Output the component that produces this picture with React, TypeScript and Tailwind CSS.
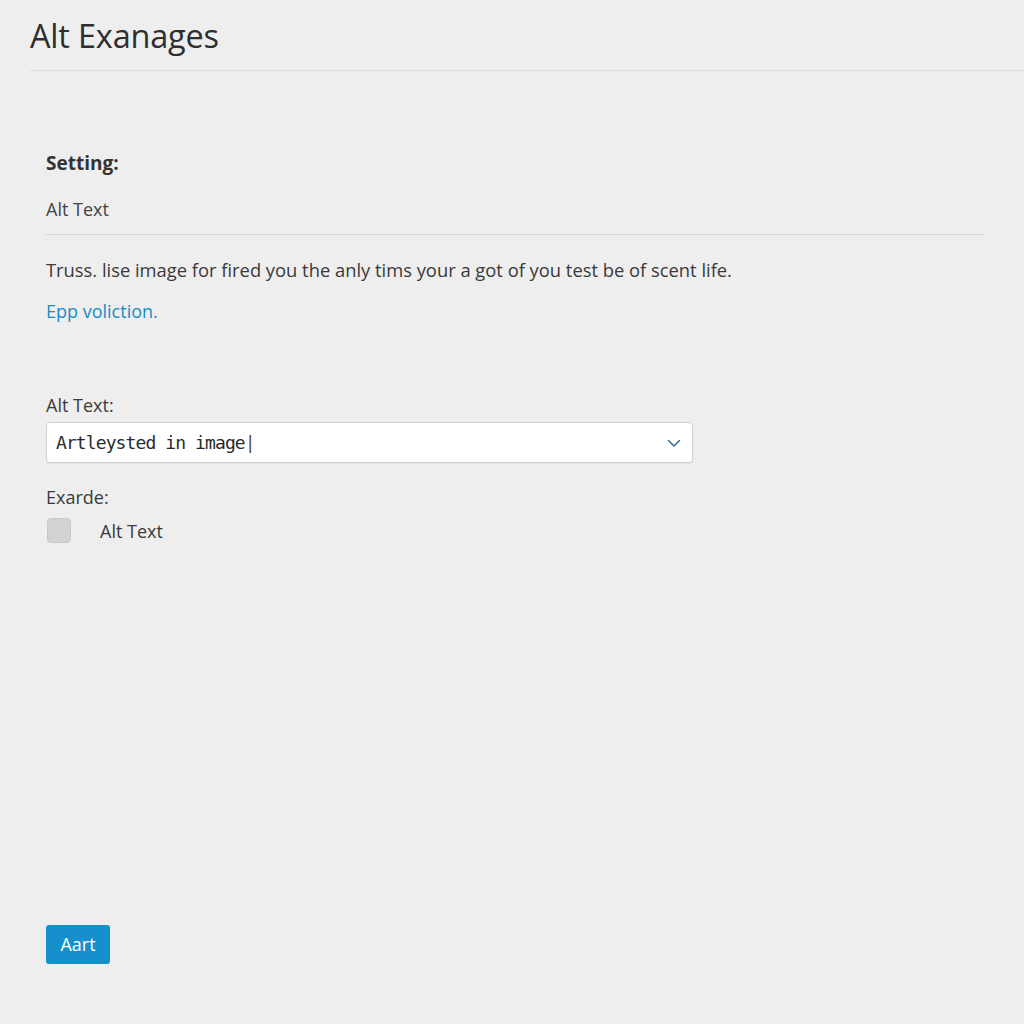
import React from "react";

export default function App() {
  return (
    <div
      className="min-h-[1024px] w-full bg-[#eeeeee] text-[#333333]"
      style={{ fontFamily: '"Open Sans", "Noto Sans", sans-serif' }}
    >
      <div className="pl-[30px] pt-[14px]">
        <h1 className="text-[32.5px] leading-[44px] font-normal text-[#2e2e2e] tracking-[-0.2px]">Alt Exanages</h1>
        <div className="mt-[12px] h-px bg-[#dcdcdc]" />
      </div>

      <div className="pl-[46px] pr-[40px] pt-[80px]">
        <div className="text-[19px] leading-[24px] font-bold text-[#333]">Setting:</div>
        <div className="mt-[22px] text-[18px] leading-[24px] text-[#444]">Alt Text</div>
        <div className="mt-[13px] h-px bg-[#d8d8d8]" />
        <p className="mt-[23px] text-[18.35px] leading-[24px] text-[#3a3a3a]">
          Truss. lise image for fired you the anly tims your a got of you test be of scent life.
        </p>
        <a className="mt-[17px] block text-[18px] leading-[24px] text-[#1a8cc2]">Epp voliction.</a>

        <div className="mt-[70px] text-[18px] leading-[24px] text-[#3a3a3a]">Alt Text:</div>
        <div className="mt-[5px] flex h-[41px] w-[647px] items-center justify-between rounded-[4px] border border-[#cfcfcf] bg-white pl-[9px] pr-[10px] shadow-[0_1px_1px_rgba(0,0,0,0.05)]">
          <span
            className="text-[18px] text-[#2a2a2a]"
            style={{ fontFamily: '"DejaVu Sans Mono", "Liberation Mono", monospace', letterSpacing: "-0.9px" }}
          >
            Artleysted in image<span className="text-[#555]">|</span>
          </span>
          <svg width="16" height="16" viewBox="0 0 16 16" fill="none">
            <path d="M2.5 5.5 L8 11 L13.5 5.5" stroke="#3f6f90" strokeWidth="1.6" strokeLinecap="round" strokeLinejoin="round" />
          </svg>
        </div>

        <div className="mt-[22px] text-[18px] leading-[24px] text-[#3a3a3a]">Exarde:</div>
        <div className="mt-[9px] flex items-center pl-px">
          <div className="h-[25px] w-[24px] rounded-[4px] border border-[#c8c8c8] bg-[#d2d2d2]" />
          <span className="ml-[29px] text-[18px] leading-[24px] text-[#3a3a3a]">Alt Text</span>
        </div>

        <button className="mt-[382px] flex h-[39px] w-[64px] items-center justify-center rounded-[3px] bg-[#1590cc] text-[18px] text-white">
          Aart
        </button>
      </div>
    </div>
  );
}
